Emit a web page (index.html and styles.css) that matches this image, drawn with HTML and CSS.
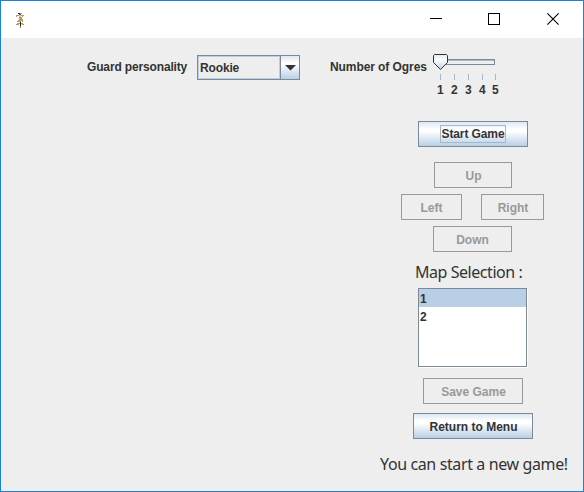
FILE: index.html
```html
<!DOCTYPE html>
<html lang="en">
<head>
<meta charset="utf-8">
<title>Game</title>
<link rel="stylesheet" href="styles.css">
</head>
<body>
<div class="window">
  <header class="titlebar">
    <svg class="app-icon" width="10" height="16" viewBox="0 0 10 16" shape-rendering="crispEdges">
      <path fill="#b89a62" d="M0 2h3v1H0zM5 2h3v1H5zM0 3h1v1H0zM6 3h1v1H6zM3 4h3v2H3zM3 6h4v2H3zM2 7h2v2H2zM6 7h1v2H6zM1 8h2v1H1zM3 8h2v1H3zM1 10h6v1H1zM0 11h3v1H0zM6 11h2v1H6z"/>
      <path fill="#26214e" d="M2 0h2v1H2z"/>
      <path fill="#8c9ce0" d="M4 0h2v1H4z"/>
      <path fill="#55526c" d="M3 1h2v1H3z"/>
      <path fill="#d8c8a0" d="M3 2h2v2H3z"/>
      <path fill="#2a1718" d="M4 9h1v4H4z"/>
      <path fill="#8c8078" d="M4 13h1v2H4z"/>
    </svg>
    <div class="controls">
      <svg width="12" height="12" shape-rendering="crispEdges"><path d="M0 5.5H12" stroke="#000"/></svg>
      <svg width="12" height="12" shape-rendering="crispEdges"><path d="M.5 .5h11v11H.5z" fill="none" stroke="#000"/></svg>
      <svg class="close" width="12" height="12"><path d="M.4 .4 11.6 11.6M11.6 .4 .4 11.6" stroke="#000" stroke-width="1.1"/></svg>
    </div>
  </header>
  <main>
    <div class="settings">
      <span class="label guard">Guard personality</span>
      <div class="combo">
        <span class="value">Rookie</span>
        <span class="arrow"><svg width="11" height="6"><path d="M0 0h11L5.5 5.5z" fill="#333"/></svg></span>
      </div>
      <span class="label ogres">Number of Ogres</span>
      <div class="slider">
        <svg width="70" height="26">
          <g shape-rendering="crispEdges">
            <path d="M8 5h54v6H8z" fill="#7a8a99"/>
            <path d="M8 7h53v3H8z" fill="#eee"/>
            <path d="M8 6h53v1H8z" fill="#a3b8cc"/>
            <path d="M7.5 20v6M21.5 20v6M35.5 20v6M49.5 20v6M62.5 20v6" stroke="#a3b8cc"/>
          </g>
          <defs><linearGradient id="thumb" x2="0" y2="1"><stop offset="0" stop-color="#dde8f3"/><stop offset=".35" stop-color="#fff"/><stop offset="1" stop-color="#b8cfe5"/></linearGradient></defs>
          <path d="M1.5 .5h12l1 1v7l-7 7-7-7V1.5z" fill="url(#thumb)" stroke="#333"/>
        </svg>
        <div class="ticks"><span>1</span><span>2</span><span>3</span><span>4</span><span>5</span></div>
      </div>
    </div>
    <div class="panel">
      <button class="btn start"><span class="focus">Start Game</span></button>
      <button class="btn off up" disabled>Up</button>
      <div class="sides"><button class="btn off left" disabled>Left</button><button class="btn off right" disabled>Right</button></div>
      <button class="btn off down" disabled>Down</button>
      <div class="heading">Map Selection :</div>
      <div class="list"><div class="item selected">1</div><div class="item">2</div></div>
      <button class="btn off save" disabled>Save Game</button>
      <button class="btn menu">Return to Menu</button>
      <div class="status">You can start a new game!</div>
    </div>
  </main>
</div>
</body>
</html>
```
FILE: styles.css
```css
* { box-sizing: border-box; }
body {
  margin: 0;
  font: bold 12px/14px "Liberation Sans", Arial, sans-serif;
  color: #333;
}
svg { display: block; }
.window {
  width: 584px;
  height: 492px;
  border: 1px solid #1883d7;
  background: #eee;
  overflow: hidden;
}
.titlebar {
  height: 37px;
  background: #fff;
  display: flex;
  justify-content: space-between;
  padding: 12px 24px 0 15px;
}
.controls { display: flex; gap: 46px; }
.close { margin-left: 1px; }
.settings {
  display: flex;
  align-items: flex-start;
  height: 67px;
  padding: 16px 0 0 86px;
}
.label { margin-top: 6px; white-space: nowrap; }
.guard { width: 110px; letter-spacing: -.15px; }
.ogres { width: 102px; letter-spacing: -.08px; }
.combo {
  display: flex;
  width: 103px;
  height: 25px;
  margin: 1px 30px 0 0;
  border: 1px solid #7a8a99;
}
.value {
  flex: 1;
  border: 1px solid #b8cfe5;
  padding: 4px 0 0 1px;
  letter-spacing: -.15px;
}
.arrow {
  width: 19px;
  border-left: 1px solid #7a8a99;
  padding: 9px 0 0 4px;
  background: linear-gradient(#dde8f3, #fff 30%, #fff 35%, #b8cfe5);
}
.slider { margin-left: 1px; }
.ticks {
  display: flex;
  gap: 7px;
  padding: 3px 0 0 4px;
}
.ticks span { width: 7px; }
.ticks span:last-child { margin-left: -1px; }
.panel {
  display: flex;
  flex-direction: column;
  align-items: flex-start;
  padding: 16px 0 0 379px;
}
.btn {
  height: 26px;
  padding: 1px 0 0 1px;
  border: 1px solid #7a8a99;
  border-radius: 0;
  font: inherit;
  color: #333;
  background: linear-gradient(#dde8f3, #fff 30%, #fff 38%, #b8cfe5);
  display: flex;
  justify-content: center;
  align-items: center;
  white-space: nowrap;
}
.off { border-color: #999; color: #999; background: #eee; }
.focus {
  width: 66px;
  height: 18px;
  border: 1px solid #a3b8cc;
  line-height: 17px;
  letter-spacing: -.1px;
}
.start { width: 110px; margin-left: 38px; padding: 0; }
.up { width: 78px; margin: 15px 0 0 54px; }
.sides { display: flex; gap: 19px; margin: 6px 0 0 21px; }
.left { width: 61px; padding-left: 0; }
.right { width: 63px; }
.down { width: 79px; margin: 6px 0 0 53px; padding-left: 0; }
.heading, .status {
  font: 16px/20px "Noto Sans", Tahoma, sans-serif;
  white-space: nowrap;
}
.heading { margin: 10px 0 0 35px; letter-spacing: -.45px; }
.list {
  width: 109px;
  height: 79px;
  margin: 6px 0 0 38px;
  border: 1px solid #7a8a99;
  background: #fff;
  box-shadow: 1px 1px #fff;
}
.item { height: 18px; padding: 3px 0 0 1px; }
.selected { background: #b8cfe5; }
.save { width: 100px; margin: 11px 0 0 43px; }
.menu { width: 120px; margin: 9px 0 0 33px; }
.status { margin-top: 15px; letter-spacing: -.38px; }
```
